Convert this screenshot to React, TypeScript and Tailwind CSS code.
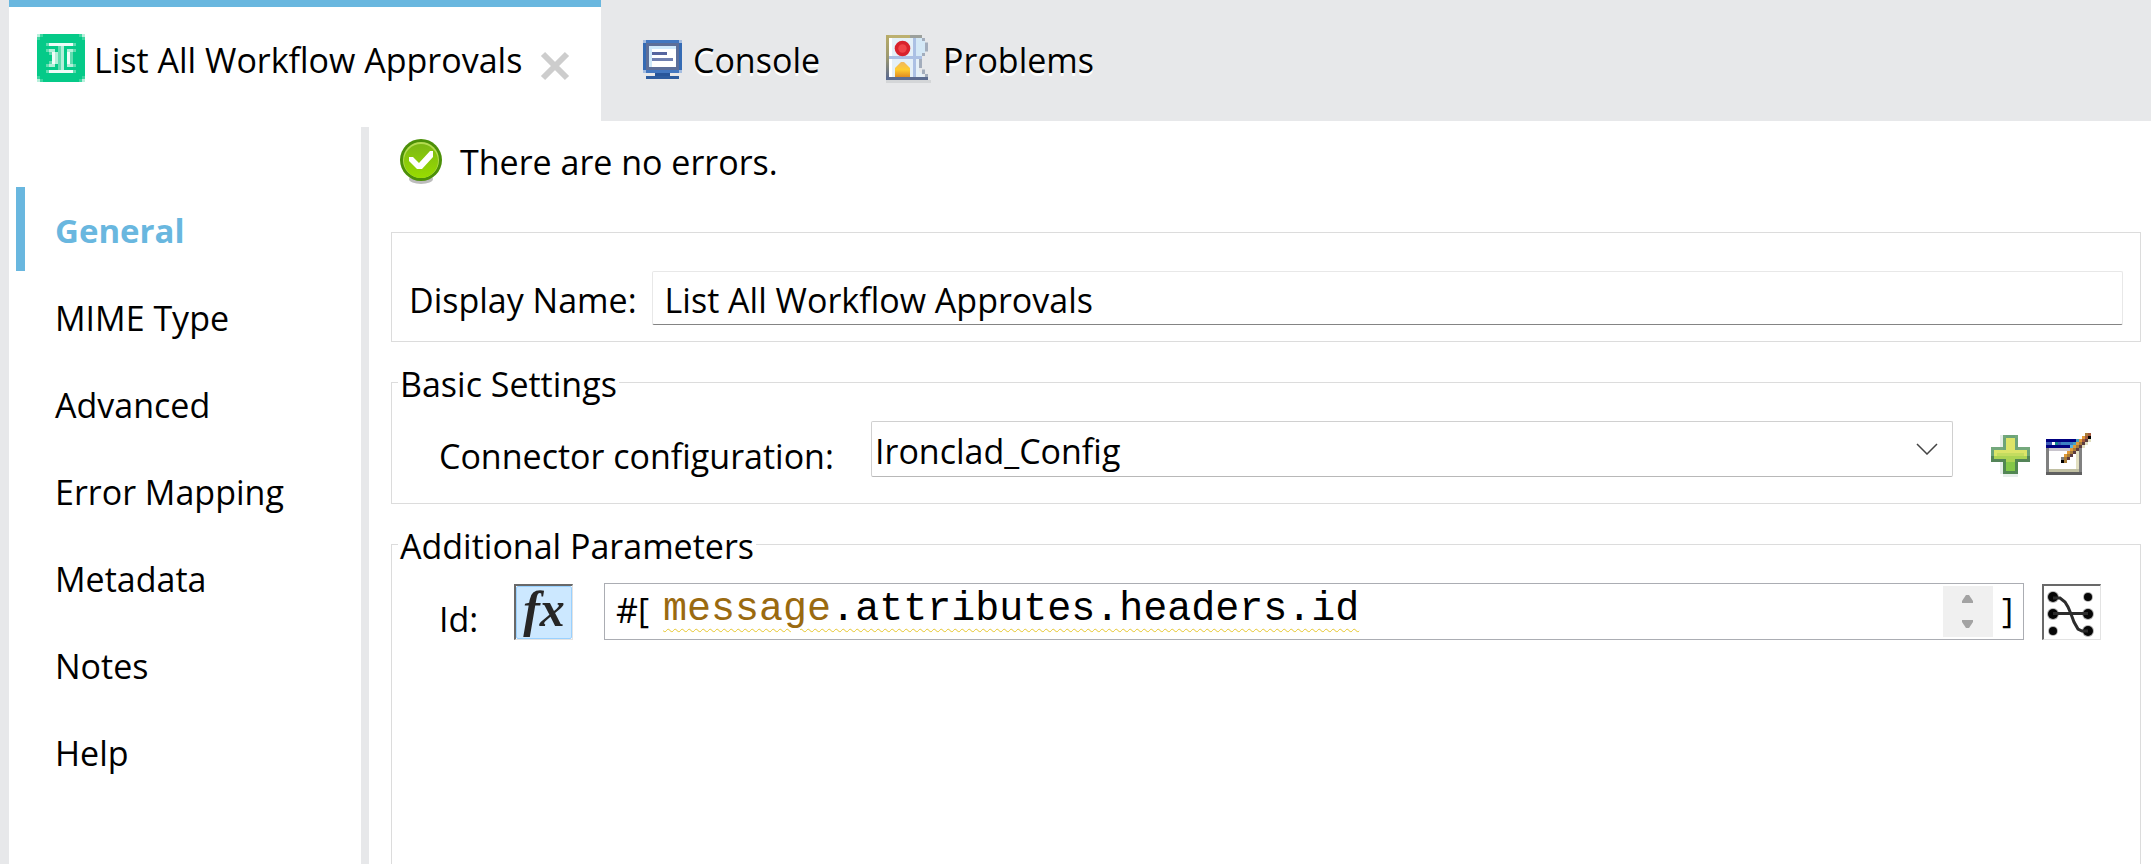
import React from "react";
import type { ReactNode } from "react";

type Palette = Record<string, string>;

function PixelIcon({ rows, palette, className }: { rows: string[]; palette: Palette; className: string }) {
  return (
    <svg viewBox={`0 0 ${rows[0].length} ${rows.length}`} className={className} shapeRendering="crispEdges" aria-hidden="true">
      {rows.flatMap((row, y) =>
        [...row].map((c, x) =>
          palette[c] ? <rect key={`${x}-${y}`} x={x} y={y} width="1" height="1" fill={palette[c]} /> : null,
        ),
      )}
    </svg>
  );
}

const editRows = [
  ".............om",
  "............amk",
  "nnnnnnnnnntamdc",
  "uuwgubbbbtaodc.",
  "nnnnnnnnlaodc..",
  "GsssssssaodG...",
  "GwwwwwwaodcG...",
  "GwwwwwaodwcG...",
  "GwwwwGodwwcG...",
  "GwwwwkowwwcG...",
  "GwwwwwwwwwcG...",
  "GwwwwwwwwwcG...",
  "GyyyyyyyyyyG...",
  "hhhhhhhhhhhh...",
];
const editPalette: Palette = {
  o: "#a87c38", m: "#a45a3c", a: "#e09a38", k: "#000000", n: "#000080", t: "#48a0c0", d: "#5c3c40",
  c: "#e2dfc0", u: "#3c5cb4", w: "#ffffff", g: "#108888", b: "#3c80c4", l: "#58b4e0", G: "#808080", s: "#c8c4cc",
  y: "#c0bfa2", h: "#606060",
};

const plusRows = [
  "...hdeeed....",
  "...heyyye....",
  "...heyyye....",
  "...heyyye....",
  "ddddeyyyedddd",
  "eyyyyyyyyyyye",
  "eyzzzzzzzzzye",
  "fxxxxxxxxxxxf",
  "ffffgxxxgffff",
  "...hgvvvg....",
  "...hgvvvg....",
  "...hgvvvg....",
  "...hfgggf....",
  "....hhhhh....",
];
const plusPalette: Palette = {
  h: "#e6eeea", d: "#74a87c", e: "#6ca478", y: "#dce468", z: "#c4dc60", x: "#acd454", f: "#548458", g: "#508850", v: "#84c848",
};

const logoRows = [
  "elggggggggggggle",
  "lggggggggggggggl",
  "gggggggggggggggg",
  "gggnwwwwwwwwnggg",
  "gggggggnmggggggg",
  "gggnmmgnmgmmnggg",
  "ggggnwmnmgwngggg",
  "gggggwmnmgwngggg",
  "gggggwmnmgwngggg",
  "ggggnwmnmgwngggg",
  "gggnmmgnmgmmnggg",
  "gggggggnmggggggg",
  "gggnwwwwwwwwnggg",
  "gggggggggggggggg",
  "lggggggggggggggl",
  "elggggggggggggle",
];
const logoPalette: Palette = { g: "#05ca88", w: "#f0fcf8", m: "#b4efd9", n: "#62dcb0", l: "#3dd6a1", e: "#b8f0dc" };

function ConsoleIcon() {
  return (
    <svg viewBox="0 0 13 13" className="size-[39px]" shapeRendering="crispEdges" aria-hidden="true">
      <rect width="13" height="11" fill="#a5bde0" />
      <rect x="1" width="11" height="11" fill="#4377c0" />
      <rect y="1" width="13" height="9" fill="#356bb4" />
      <rect x="1" y="1" width="11" height="9" fill="#5d6f99" />
      <rect x="2" y="2" width="9" height="7" fill="#cfe9fb" />
      <rect x="3" y="3" width="8" height="6" fill="#ffffff" />
      <rect x="3" y="4" width="5" height="1" fill="#56659f" />
      <rect x="3" y="6" width="7" height="1" fill="#7080b0" />
      <rect x="4" y="11" width="5" height="1" fill="#28569a" />
      <rect x="1" y="12" width="11" height="1" fill="#2d5c9f" />
    </svg>
  );
}

function ProblemsIcon() {
  return (
    <svg viewBox="0 0 15 16" className="h-12 w-[45px]" aria-hidden="true">
      <defs>
        <linearGradient id="spine" x1="0" y1="0" x2="0" y2="1">
          <stop offset="0" stopColor="#b8ac68" />
          <stop offset="0.5" stopColor="#9c9870" />
          <stop offset="1" stopColor="#566690" />
        </linearGradient>
        <linearGradient id="lamp" x1="0" y1="0" x2="0" y2="1">
          <stop offset="0" stopColor="#f0b860" />
          <stop offset="0.5" stopColor="#ffcc30" />
          <stop offset="1" stopColor="#e08c20" />
        </linearGradient>
      </defs>
      <path d="M1 1h11l1 1v4l-1 1-1 2v3l2 2H1z" fill="#e4f0f8" />
      <path d="M10 1h2l1 1v4l-1 1h-2z" fill="#d4e8f6" />
      <path d="M12.500 1v1M13.500 2.500v3M12.500 6v1M11.500 8v3M12.500 11.500v1.500M13.500 13v1" fill="none" stroke="#a3adbc" strokeWidth="1" />
      <g shapeRendering="crispEdges">
        <rect x="1" y="1" width="1" height="13" fill="#ffffff" />
        <rect x="9" y="1" width="1" height="13" fill="#abc0e4" />
        <rect x="1" y="7" width="11" height="1" fill="#abc0e4" />
        <rect width="8" height="1" fill="#bcb070" />
        <rect x="8" width="4" height="1" fill="#9ca09c" />
        <rect width="1" height="15" fill="url(#spine)" />
        <rect y="14" width="14" height="1" fill="#5c6c90" />
        <rect y="15" width="15" height="1" fill="#d4d6d8" />
      </g>
      <circle cx="5.500" cy="4.500" r="2.600" fill="#d8222c" />
      <circle cx="5.500" cy="4.500" r="1.400" fill="#f04448" />
      <path d="M3 14v-3l1-1 1-1h1l1 1 1 1v3z" fill="url(#lamp)" />
    </svg>
  );
}

function OkIcon() {
  return (
    <svg viewBox="0 0 42 45" className="h-[45px] w-[42px]" aria-hidden="true">
      <defs>
        <linearGradient id="ok" x1="0" y1="0" x2="0" y2="1">
          <stop offset="0" stopColor="#7cb814" />
          <stop offset="1" stopColor="#98dc00" />
        </linearGradient>
      </defs>
      <ellipse cx="21" cy="40" rx="12" ry="5" fill="#bcbcbc" />
      <circle cx="21" cy="21" r="21" fill="#4c9008" />
      <circle cx="21" cy="21" r="18" fill="#b4dc50" />
      <circle cx="21" cy="22" r="17" fill="url(#ok)" />
      <path d="M9 18h4l6 6L30 12h3v6L22 30h-5l-8-8z" fill="#ffffff" />
    </svg>
  );
}

const mapDots = [
  [9, 11, 5],
  [44, 11, 4],
  [9, 28, 5],
  [44, 28, 5],
  [9, 45, 4],
  [44, 45, 5],
];

function MapIcon() {
  return (
    <svg viewBox="0 0 56 54" className="h-[54px] w-[56px]" aria-hidden="true">
      {mapDots.map(([x, y, r]) => (
        <g key={`${x}-${y}`}>
          <circle cx={x} cy={y} r={r + 1} fill="#b4b4b4" />
          <circle cx={x} cy={y} r={r} fill="#060606" />
        </g>
      ))}
      <path d="M9 12L16 12L21 16L24 21L27 28L30 36L34 43L38 45L44 45" fill="none" stroke="#2c2c2c" strokeWidth="3" />
      <rect x="9" y="26" width="35" height="3" fill="#2c2c2c" />
    </svg>
  );
}

function Group({ title, className, children }: { title: string; className: string; children: ReactNode }) {
  return (
    <fieldset className={`min-w-0 border border-[#dcdcdc] pt-[15px] ${className}`}>
      <legend className="ml-[6px] px-[2px] pt-1 leading-[43px]">{title}</legend>
      {children}
    </fieldset>
  );
}

const sections = ["General", "MIME Type", "Advanced", "Error Mapping", "Metadata", "Notes", "Help"];

export default function App() {
  const [section, setSection] = React.useState("General");
  const [name, setName] = React.useState("List All Workflow Approvals");

  return (
    <div className="flex min-h-screen flex-col border-l-[9px] border-[#e7e8ea] bg-white font-['Open_Sans','Noto_Sans',sans-serif] text-[34px] leading-[42px] text-black">
      <header role="tablist" className="flex h-[121px] bg-[#e7e8ea]">
        <div className="flex w-[592px] items-center border-t-[7px] border-[#69b7df] bg-white pl-7">
          <button type="button" role="tab" aria-selected="true" className="flex items-center gap-[9px] whitespace-nowrap">
            <PixelIcon rows={logoRows} palette={logoPalette} className="mb-3 size-12" />
            <span className="mb-2">List All Workflow Approvals</span>
          </button>
          <button type="button" aria-label="Close tab" className="ml-[18px] pt-[3px]">
            <svg viewBox="0 0 30 30" className="size-[30px]" aria-hidden="true">
              <path d="M3 3l24 24M27 3L3 27" stroke="#cdcdcd" strokeWidth="6" />
            </svg>
          </button>
        </div>
        <button type="button" role="tab" aria-selected="false" className="ml-[42px] flex items-center gap-[11px] pb-[3px]">
          <ConsoleIcon />
          <span className="pt-[2px] [text-shadow:0_3px_0_#fff]">Console</span>
        </button>
        <button type="button" role="tab" aria-selected="false" className="ml-[66px] flex items-center gap-3 pb-[3px]">
          <ProblemsIcon />
          <span className="pt-[2px] [text-shadow:0_3px_0_#fff]">Problems</span>
        </button>
      </header>

      <div className="flex grow pt-[6px]">
        <nav className="flex w-[352px] shrink-0 flex-col gap-[3px] pt-[60px] pl-[7px]">
          {sections.map((s) => (
            <button
              key={s}
              type="button"
              onClick={() => setSection(s)}
              className={`flex h-[84px] items-center border-l-[9px] pt-1 pl-[30px] text-left ${
                s === section ? "border-[#69b7df] text-[33px] font-bold text-[#69b7df]" : "border-transparent"
              }`}
            >
              {s}
            </button>
          ))}
        </nav>
        <div className="w-2 shrink-0 bg-[#e7e8ea]" />

        <main className="flex min-w-0 grow flex-col pr-[10px] pl-[22px]">
          <p className="flex items-center gap-[18px] pt-3 pl-[9px]">
            <OkIcon />
            There are no errors.
          </p>

          <div className="mt-12 flex items-center gap-[15px] border border-[#dcdcdc] pt-[38px] pr-[17px] pb-4 pl-[17px]">
            <label htmlFor="display-name" className="mt-1 whitespace-nowrap">
              Display Name:
            </label>
            <input
              id="display-name"
              value={name}
              onChange={(e) => setName(e.target.value)}
              className="h-[54px] min-w-0 grow rounded-xs border border-[#e8e8e8] border-b-[#848484] pt-1 pl-3 outline-none"
            />
          </div>

          <Group title="Basic Settings" className="mt-[17px] pb-[26px]">
            <div className="flex items-end pr-[49px] pl-[47px]">
              <label htmlFor="config" className="w-[432px] shrink-0">
                Connector configuration:
              </label>
              <div className="grid min-w-0 grow items-center">
                <select
                  id="config"
                  className="col-start-1 row-start-1 h-14 w-full appearance-none rounded-xs border border-[#d0d0d0] border-b-[#b8b8b8] bg-white pt-[3px] pl-[3px] outline-none"
                >
                  <option>Ironclad_Config</option>
                </select>
                <svg viewBox="0 0 22 12" className="pointer-events-none col-start-1 row-start-1 mr-[15px] h-3 w-[22px] justify-self-end" aria-hidden="true">
                  <path d="M1 1l10 10L21 1" fill="none" stroke="#444444" strokeWidth="1.500" />
                </svg>
              </div>
              <button type="button" aria-label="Add configuration" className="ml-[38px] shrink-0">
                <PixelIcon rows={plusRows} palette={plusPalette} className="h-[42px] w-[39px]" />
              </button>
              <button type="button" aria-label="Edit configuration" className="mb-[2px] ml-4 shrink-0">
                <PixelIcon rows={editRows} palette={editPalette} className="h-[42px] w-[45px]" />
              </button>
            </div>
          </Group>

          <Group title="Additional Parameters" className="mt-[17px] grow border-b-0">
            <div className="flex items-end pr-[39px] pl-[47px]">
              <label htmlFor="param-id" className="w-[75px] shrink-0">
                Id:
              </label>
              <button
                type="button"
                aria-pressed="true"
                className="h-14 w-[59px] shrink-0 border border-t-2 border-l-2 border-[#e3e3e3] border-t-[#696969] border-l-[#696969] bg-white"
              >
                <span className="flex h-full items-center justify-center rounded-xs border border-[#99d1ff] bg-[#cce8ff] pb-2 font-['Liberation_Serif',serif] text-[50px] leading-none font-bold text-[#262626] italic">
                  fx
                </span>
              </button>
              <div className="ml-[31px] flex h-[57px] min-w-0 grow items-center border border-[#abadb3] p-[2px]">
                <span className="pb-1 pl-[9px]">#[</span>
                <div className="ml-[14px] grid min-w-0 grow font-['Liberation_Mono',monospace] text-[40px] leading-[48px]">
                  <div aria-hidden="true" className="col-start-1 row-start-1 pb-1">
                    <span className="underline decoration-[#e6c62c] decoration-wavy decoration-1 underline-offset-8">
                      <span className="text-[#9a6a10]">message</span>.attributes.headers.id
                    </span>
                  </div>
                  <input
                    id="param-id"
                    defaultValue="message.attributes.headers.id"
                    readOnly
                    className="col-start-1 row-start-1 min-w-0 bg-transparent pb-1 text-transparent outline-none"
                  />
                </div>
                <div className="flex h-full w-[50px] shrink-0 flex-col items-center justify-around bg-[#f0f0f0]">
                  <button type="button" aria-label="Previous line">
                    <svg viewBox="0 0 11 8" className="h-2 w-[11px]" aria-hidden="true">
                      <path d="M4 0h3l4 6v2H0V6z" fill="#a3a3a3" />
                    </svg>
                  </button>
                  <button type="button" aria-label="Next line">
                    <svg viewBox="0 0 11 8" className="h-2 w-[11px]" aria-hidden="true">
                      <path d="M4 8h3l4-6V0H0v2z" fill="#a3a3a3" />
                    </svg>
                  </button>
                </div>
                <span className="pr-2 pb-1 pl-[9px]">]</span>
              </div>
              <button
                type="button"
                aria-label="Open mapping"
                className="ml-[18px] h-14 w-[59px] shrink-0 border border-t-2 border-l-2 border-[#e3e3e3] border-t-[#696969] border-l-[#696969] bg-white"
              >
                <MapIcon />
              </button>
            </div>
          </Group>
        </main>
      </div>
    </div>
  );
}
